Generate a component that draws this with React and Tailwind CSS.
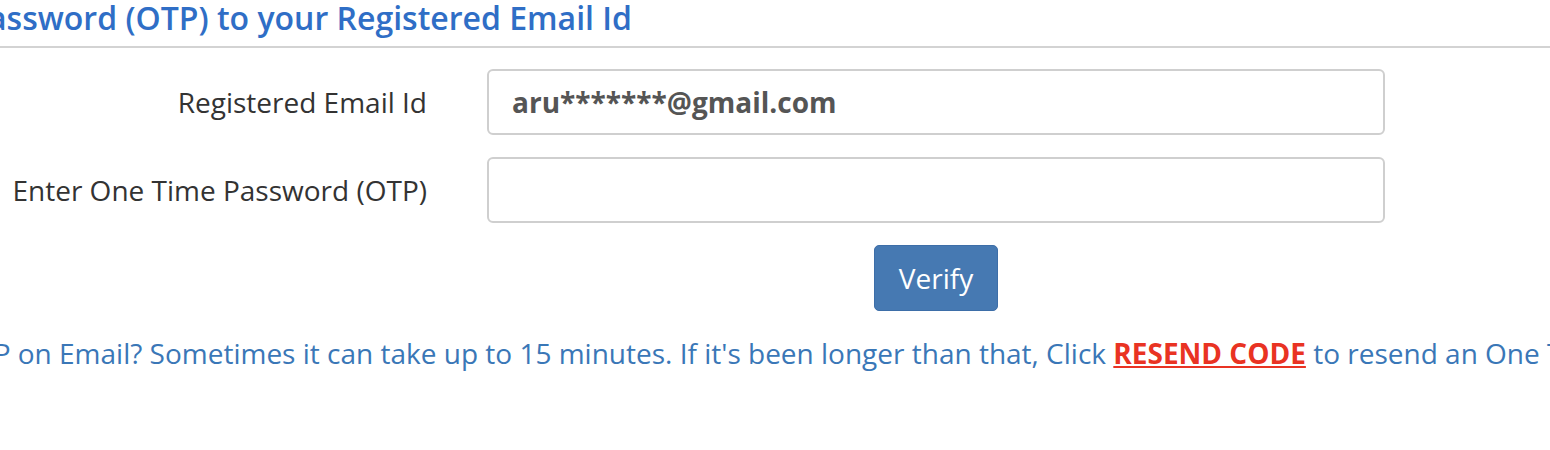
import React from "react";

const OtpVerify = () => {
  return (
    <div className="w-[1550px] h-[450px] overflow-hidden bg-white font-['Open_Sans',sans-serif]">
      <div className="h-[48px] border-b-2 border-[#d3d3d3]">
        <div className="w-[632px] flex justify-end whitespace-nowrap">
          <h2 className="text-[32px] leading-[36px] font-semibold text-[#2f6ec6]">
            We have sent One Time Password (OTP) to your Registered Email Id
          </h2>
        </div>
      </div>

      <form className="pt-[21px]" onSubmit={(e) => e.preventDefault()}>
        <div className="flex items-center">
          <label className="w-[427px] text-right text-[28px] text-[#333]">
            Registered Email Id
          </label>
          <input
            readOnly
            value="aru*******@gmail.com"
            className="ml-[60px] w-[898px] h-[66px] px-[23px] rounded-[6px] border-2 border-[#cfcfcf] text-[28px] font-bold text-[#555] outline-none"
          />
        </div>
        <div className="flex items-center mt-[22px]">
          <label className="w-[427px] text-right text-[28px] text-[#333]">
            Enter One Time Password (OTP)
          </label>
          <input
            className="ml-[60px] w-[898px] h-[66px] px-[23px] rounded-[6px] border-2 border-[#cfcfcf] text-[28px] text-[#555] outline-none"
          />
        </div>
        <div className="flex mt-[22px]">
          <div className="ml-[487px] w-[898px] flex justify-center">
            <button
              type="submit"
              className="w-[124px] h-[66px] rounded-[5px] bg-[#4679b2] border border-[#3d6ea8] text-white text-[28px]"
            >
              Verify
            </button>
          </div>
        </div>
      </form>

      <p className="mt-[21px] -ml-[229px] whitespace-nowrap text-[28px] text-[#3a77b7]">
        Didn't receive OTP on Email? Sometimes it can take up to 15 minutes. If it's been longer than that, Click{" "}
        <a href="#" className="font-bold text-[#e93323] underline">
          RESEND CODE
        </a>{" "}
        to resend an One Time Password (OTP).
      </p>
    </div>
  );
};

export default function App() {
  return <OtpVerify />;
}
